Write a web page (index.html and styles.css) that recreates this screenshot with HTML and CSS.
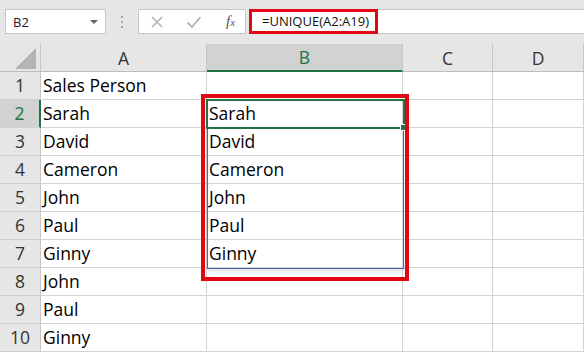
FILE: index.html
```html
<!DOCTYPE html>
<html lang="en">
<head>
  <meta charset="UTF-8">
  <title>UNIQUE function</title>
  <link rel="stylesheet" href="styles.css">
</head>
<body>
  <div class="toolbar">
    <div class="namebox">
      <span>B2</span>
      <span class="caret"></span>
    </div>
    <div class="grip"><i></i><i></i><i></i></div>
    <div class="fbuttons">
      <svg class="ico" width="14" height="14" viewBox="0 0 14 14"><path d="M2 2 L12 12 M12 2 L2 12" stroke="#b3b3b3" stroke-width="1.6" fill="none"/></svg>
      <svg class="ico" width="16" height="14" viewBox="0 0 16 14"><path d="M1.5 7.5 L6 12 L14.5 2" stroke="#b3b3b3" stroke-width="1.8" fill="none"/></svg>
      <span class="fx">f<small>x</small></span>
    </div>
    <div class="formula">
      <span class="formula-text">=UNIQUE(A2:A19)</span>
    </div>
  </div>

  <div class="sheet">
    <div class="grid">
      <div class="hd corner"><span class="tri"></span></div>
      <div class="hd">A</div>
      <div class="hd sel-col">B</div>
      <div class="hd">C</div>
      <div class="hd">D</div>

      <div class="rh">1</div><div class="c">Sales Person</div><div class="c"></div><div class="c"></div><div class="c"></div>
      <div class="rh sel-row">2</div><div class="c">Sarah</div><div class="c">Sarah</div><div class="c"></div><div class="c"></div>
      <div class="rh">3</div><div class="c">David</div><div class="c">David</div><div class="c"></div><div class="c"></div>
      <div class="rh">4</div><div class="c">Cameron</div><div class="c">Cameron</div><div class="c"></div><div class="c"></div>
      <div class="rh">5</div><div class="c">John</div><div class="c">John</div><div class="c"></div><div class="c"></div>
      <div class="rh">6</div><div class="c">Paul</div><div class="c">Paul</div><div class="c"></div><div class="c"></div>
      <div class="rh">7</div><div class="c">Ginny</div><div class="c">Ginny</div><div class="c"></div><div class="c"></div>
      <div class="rh">8</div><div class="c">John</div><div class="c"></div><div class="c"></div><div class="c"></div>
      <div class="rh">9</div><div class="c">Paul</div><div class="c"></div><div class="c"></div><div class="c"></div>
      <div class="rh">10</div><div class="c">Ginny</div><div class="c"></div><div class="c"></div><div class="c"></div>
    </div>

    <!-- overlays: spill range, active cell, highlight -->
    <div class="spill"></div>
    <div class="active"><span class="handle"></span></div>
    <div class="mark"></div>
  </div>
</body>
</html>
```

FILE: styles.css
```css
body {
  margin: 0;
  background: #fff;
  font-family: "Open Sans", "Noto Sans", sans-serif;
  color: #000;
  overflow: hidden;
}

.toolbar {
  height: 44px;
  box-sizing: border-box;
  background: #e6e6e6;
  display: flex;
  align-items: flex-start;
  padding: 9px 0 0 5px;
}

.namebox {
  width: 101px;
  height: 25px;
  box-sizing: border-box;
  background: #fff;
  border: 1px solid #c8c8c8;
  display: flex;
  align-items: center;
  justify-content: space-between;
  padding: 0 7px 0 7px;
  font-size: 13px;
  color: #222;
}

.caret {
  width: 0;
  height: 0;
  border-left: 4px solid transparent;
  border-right: 4px solid transparent;
  border-top: 4px solid #666;
}

.grip {
  width: 32px;
  height: 25px;
  display: flex;
  flex-direction: column;
  align-items: center;
  justify-content: center;
  gap: 3px;
}

.grip i {
  width: 2px;
  height: 2px;
  background: #a8a8a8;
}

.fbuttons {
  width: 108px;
  height: 25px;
  box-sizing: border-box;
  background: #fff;
  border: 1px solid #c8c8c8;
  display: flex;
  align-items: center;
  padding: 0 0 0 11px;
  gap: 22px;
}

.fx {
  font-family: "Liberation Serif", serif;
  font-style: italic;
  font-size: 15px;
  color: #555;
  margin-left: 2px;
}

.fx small {
  font-size: 11px;
}

.formula {
  flex: 1;
  height: 25px;
  margin-left: 3px;
  background: #fff;
  border-top: 1px solid #c8c8c8;
  border-bottom: 1px solid #c8c8c8;
  box-sizing: border-box;
  position: relative;
}

.formula-text {
  position: absolute;
  left: 0;
  top: -1px;
  width: 129px;
  height: 25px;
  box-sizing: border-box;
  border: 3px solid #e30613;
  font-size: 13px;
  line-height: 19px;
  padding-left: 10px;
  color: #111;
}

.sheet {
  position: relative;
}

.grid {
  display: grid;
  grid-template-columns: 41px 166px 196px 90px 1fr;
  grid-auto-rows: 28px;
}

.hd {
  background: #e6e6e6;
  border-right: 1px solid #c6c6c6;
  border-bottom: 1px solid #bdbdbd;
  box-sizing: border-box;
  display: flex;
  align-items: center;
  justify-content: center;
  font-size: 17.5px;
  color: #333;
}

.corner {
  position: relative;
}

.tri {
  position: absolute;
  left: 15px;
  top: 4px;
  width: 0;
  height: 0;
  border-left: 21px solid transparent;
  border-bottom: 21px solid #b4b4b4;
}

.sel-col {
  background: #d2d2d2;
  color: #217346;
  border-bottom: 2px solid #217346;
}

.rh {
  background: #e6e6e6;
  border-right: 1px solid #c6c6c6;
  border-bottom: 1px solid #d0d0d0;
  box-sizing: border-box;
  display: flex;
  align-items: flex-end;
  justify-content: center;
  padding-bottom: 2px;
  font-size: 17.5px;
  color: #333;
}

.sel-row {
  background: #d2d2d2;
  color: #217346;
  border-right: 2px solid #217346;
}

.c {
  border-right: 1px solid #d4d4d4;
  border-bottom: 1px solid #d4d4d4;
  box-sizing: border-box;
  display: flex;
  align-items: flex-end;
  padding: 0 0 2px 2px;
  font-size: 17.5px;
  white-space: nowrap;
}

.spill {
  position: absolute;
  left: 207px;
  top: 56px;
  width: 197px;
  height: 169px;
  box-sizing: border-box;
  border: 1px solid #3e68b0;
  box-shadow: 0 2px 4px rgba(0, 0, 0, 0.12);
}

.active {
  position: absolute;
  left: 206px;
  top: 55px;
  width: 199px;
  height: 30px;
  box-sizing: border-box;
  border: 2px solid #217346;
}

.handle {
  position: absolute;
  right: -4px;
  bottom: -4px;
  width: 5px;
  height: 5px;
  background: #217346;
  border: 1px solid #fff;
}

.mark {
  position: absolute;
  left: 201px;
  top: 50px;
  width: 208px;
  height: 187px;
  box-sizing: border-box;
  border: 4px solid #e30613;
}
```
